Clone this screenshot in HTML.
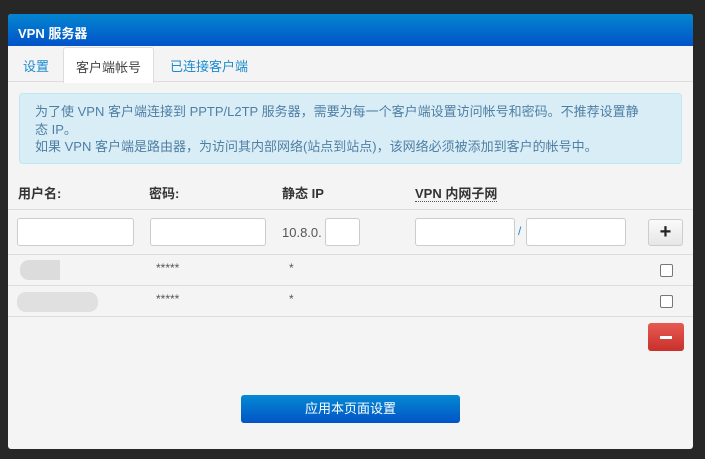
<!DOCTYPE html>
<html><head><meta charset="utf-8">
<style>
*{box-sizing:border-box;margin:0;padding:0}
body{width:705px;height:459px;background:#272727;font-family:"Liberation Sans","Noto Sans CJK SC",sans-serif;position:relative;overflow:hidden;font-size:13px;color:#333}
.panel{position:absolute;left:8px;top:14px;width:685px;height:435px;background:#f4f4f4;border-radius:3px;overflow:hidden}
.hdr{position:absolute;left:0;top:0;width:100%;height:32px;background:linear-gradient(#0486d0,#0253c8);color:#fff;font-weight:bold;font-size:13px;padding:9px 0 0 10px}
.tabs{position:absolute;left:0;top:32px;width:100%;height:36px;border-bottom:1px solid #ddd}
.tab{position:absolute;top:10px;color:#1a8ccf;font-size:13px}
.tab.act{top:1px;left:55px;width:91px;height:36px;background:#fff;border:1px solid #ddd;border-bottom:none;border-radius:3px 3px 0 0;color:#444;padding-top:9px;text-align:center}
.alert{position:absolute;left:11px;top:79px;width:663px;height:71px;background:#d9edf7;border:1px solid #bce8f1;border-radius:4px;color:#4f7fa3;font-size:13px;line-height:17.5px;padding:9px 0 0 15px}
.th{position:absolute;top:172px;font-weight:bold;font-size:13px;color:#333;line-height:15px}
.line{position:absolute;left:0;width:100%;height:1px;background:#ddd}
.inp{position:absolute;height:28px;background:#fff;border:1px solid #ccc;border-radius:3px}
.t{position:absolute;font-size:12px;color:#555}
.cb{position:absolute;width:13px;height:13px;border:1px solid #777;border-radius:2px;background:#fff}
.blob{position:absolute;background:#dcdcdc;border-radius:9px;height:20px}
</style></head><body>
<div class="panel">
<div class="hdr">VPN 服务器</div>
<div class="tabs">
<div class="tab" style="left:15px">设置</div>
<div class="tab act">客户端帐号</div>
<div class="tab" style="left:162px">已连接客户端</div>
</div>
<div class="alert">为了使 VPN 客户端连接到 PPTP/L2TP 服务器，需要为每一个客户端设置访问帐号和密码。不推荐设置静<br>态 IP。<br>如果 VPN 客户端是路由器，为访问其内部网络(站点到站点)，该网络必须被添加到客户的帐号中。</div>
<div class="th" style="left:10px">用户名:</div>
<div class="th" style="left:141px">密码:</div>
<div class="th" style="left:274px">静态 IP</div>
<div class="th" style="left:407px;border-bottom:1px dotted #555">VPN 内网子网</div>
<div class="line" style="top:195px"></div>
<div class="inp" style="left:9px;top:204px;width:117px"></div>
<div class="inp" style="left:142px;top:204px;width:116px"></div>
<div class="t" style="left:274px;top:211px;font-size:13px">10.8.0.</div>
<div class="inp" style="left:317px;top:204px;width:35px"></div>
<div class="inp" style="left:407px;top:204px;width:100px"></div>
<div class="t" style="left:510px;top:210px;color:#1a8ccf">/</div>
<div class="inp" style="left:518px;top:204px;width:100px"></div>
<div style="position:absolute;left:640px;top:205px;width:35px;height:27px;background:linear-gradient(#fafafa,#e6e6e6);border:1px solid #ccc;border-radius:3px;text-align:center;font-weight:bold;font-size:20px;line-height:24px;color:#222">+</div>
<div class="line" style="top:240px"></div>
<div class="blob" style="left:12px;top:246px;width:40px;border-radius:9px 0 0 9px"></div>
<div class="t" style="left:148px;top:247px">*****</div>
<div class="t" style="left:281px;top:247px">*</div>
<div class="cb" style="left:652px;top:250px"></div>
<div class="line" style="top:271px"></div>
<div class="blob" style="left:9px;top:278px;width:81px;background:#e0e0e0"></div>
<div class="t" style="left:148px;top:278px">*****</div>
<div class="t" style="left:281px;top:278px">*</div>
<div class="cb" style="left:652px;top:281px"></div>
<div class="line" style="top:302px"></div>
<div style="position:absolute;left:640px;top:309px;width:36px;height:28px;background:linear-gradient(#e65a52,#c8302b);border-radius:3px"><div style="position:absolute;left:12px;top:13px;width:12px;height:3px;background:#fff"></div></div>
<div style="position:absolute;left:233px;top:381px;width:219px;height:28px;background:linear-gradient(#0489d2,#0254c6);border-radius:3px;color:#fff;text-align:center;font-size:13px;line-height:28px">应用本页面设置</div>
</div>
</body></html>
